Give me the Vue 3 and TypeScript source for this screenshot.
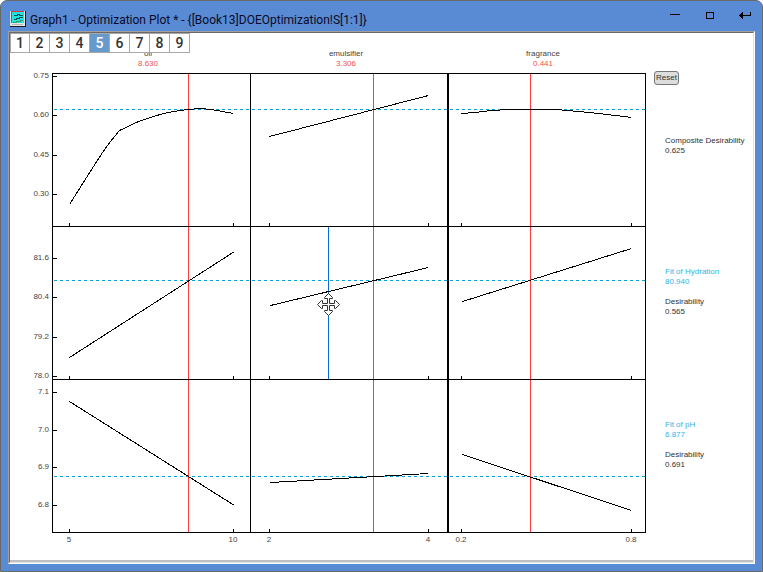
<script setup lang="ts">
import { ref } from 'vue'

interface Tick { label: string; at: number }
interface Factor { name: string; value: string; center: number; current: number; ticks: Tick[] }
interface Response { bottom: number; fit: number; ticks: Tick[] }
interface Readout { fit?: string; fitValue?: string; label: string; value: string }

const title = 'Graph1 - Optimization Plot * - {[Book13]DOEOptimization!S[1:1]}'
const pages = [1, 2, 3, 4, 5, 6, 7, 8, 9]
const activePage = ref(5)

const factors: Factor[] = [
  { name: 'oil', value: '8.630', center: 148, current: 188, ticks: [{ label: '5', at: 69 }, { label: '10', at: 233 }] },
  { name: 'emulsifier', value: '3.306', center: 346, current: 373, ticks: [{ label: '2', at: 269 }, { label: '4', at: 428 }] },
  { name: 'fragrance', value: '0.441', center: 543, current: 530, ticks: [{ label: '0.2', at: 461 }, { label: '0.8', at: 631 }] },
]

const responses: Response[] = [
  { bottom: 226, fit: 109, ticks: [{ label: '0.75', at: 76 }, { label: '0.60', at: 115 }, { label: '0.45', at: 155 }, { label: '0.30', at: 194 }] },
  { bottom: 379, fit: 280, ticks: [{ label: '81.6', at: 258 }, { label: '80.4', at: 297 }, { label: '79.2', at: 337 }, { label: '78.0', at: 376 }] },
  { bottom: 532, fit: 476, ticks: [{ label: '7.1', at: 392 }, { label: '7.0', at: 430 }, { label: '6.9', at: 467 }, { label: '6.8', at: 505 }] },
]

const curves: string[] = [
  '69,204 86,177 102,152 110,141 119,130 138,121 153,116 163,113 173,111 187,109 200,108 210,109 222,111 233,113',
  '269,136 428,95',
  '461,113 475,112 490,110 510,109 556,109 578,111 598,113 615,115 631,117',
  '69,357 234,251',
  '270,305 428,267',
  '462,301 631,248',
  '69,401 234,505',
  '270,482 428,473',
  '462,454 631,510',
]

const readouts: Readout[] = [
  { label: 'Composite Desirability', value: '0.625' },
  { fit: 'Fit of Hydration', fitValue: '80.940', label: 'Desirability', value: '0.565' },
  { fit: 'Fit of pH', fitValue: '6.877', label: 'Desirability', value: '0.691' },
]
</script>

<template>
  <div class="window">
    <header class="titlebar">
      <svg class="app-icon" viewBox="0 0 16 16" width="16" height="16" shape-rendering="crispEdges">
        <rect width="16" height="16" fill="#1c1c1c" />
        <rect width="15" height="15" fill="#e4e4e4" />
        <rect x="2" y="1" width="12" height="11" fill="#1fe3dc" />
        <path d="M1.500 12V0.500H14" fill="none" stroke="#d83a4a" />
        <path d="M4 4.500h3v-1h2v1h4M4 8.500h2v-1h3v-1h4" fill="none" stroke="#0c4a58" />
        <path d="M3 11.500h3v-1h4v-1h3" fill="none" stroke="#2f9e6c" />
        <path d="M2 13.500h11" fill="none" stroke="#b8b8b8" />
      </svg>
      <h1 class="title">{{ title }}</h1>
      <div class="controls">
        <button type="button" class="control" aria-label="Minimize">
          <svg viewBox="0 0 14 10" width="14" height="10" shape-rendering="crispEdges"><path d="M2 3.500h10" /></svg>
        </button>
        <button type="button" class="control" aria-label="Maximize">
          <svg viewBox="0 0 14 10" width="14" height="10" shape-rendering="crispEdges"><path d="M3.500 1v6.500h7V1M3 1.500h8" /></svg>
        </button>
        <button type="button" class="control" aria-label="Restore">
          <svg viewBox="0 0 14 10" width="14" height="10" shape-rendering="crispEdges">
            <path d="M3 4.500h9.500V1" /><path class="solid" d="M1 4.500L5 1v7z" />
          </svg>
        </button>
      </div>
    </header>

    <main class="frame">
      <div class="client">
        <nav class="pages" aria-label="Graph pages">
          <button v-for="p in pages" :key="p" type="button" class="page" :class="{ active: p === activePage }" @click="activePage = p">{{ p }}</button>
        </nav>

        <svg class="plot" viewBox="10 33 643 527" role="img" aria-label="Optimization plot">
          <g v-for="f in factors" :key="f.name" text-anchor="middle">
            <text :x="f.center" y="56" class="label">{{ f.name }}</text>
            <text :x="f.center" y="66" class="label current">{{ f.value }}</text>
            <text v-for="t in f.ticks" :key="t.label" :x="t.at" y="542" class="label">{{ t.label }}</text>
          </g>
          <g v-for="r in responses" :key="r.fit" text-anchor="end">
            <text v-for="t in r.ticks" :key="t.label" x="49" :y="t.at + 2" class="label">{{ t.label }}</text>
          </g>

          <g class="lines" transform="translate(0.5 0.5)">
            <path v-for="r in responses" :key="r.fit" class="fit-line" :d="`M53 ${r.fit}H645`" />
            <path v-for="f in factors" :key="f.name" class="current-line" :d="`M${f.current} 73V532`" />
            <path class="drag-line" d="M328 226V379" />
            <polyline v-for="c in curves" :key="c" :points="c" />
            <path d="M52 73H645V532H52ZM52 226H645M52 379H645M250 73V532" />
            <path class="divider" d="M447.500 73V532" />
            <template v-for="r in responses" :key="r.bottom">
              <path v-for="t in r.ticks" :key="t.label" :d="`M52 ${t.at}h4`" />
              <template v-for="f in factors" :key="f.name">
                <path v-for="t in f.ticks" :key="t.label" :d="`M${t.at} ${r.bottom}v-4`" />
              </template>
            </template>
          </g>

          <g class="move-cursor" transform="translate(328.5 304.5)">
            <path d="M0-11L4-7V-6H1V-1H6V-4H7L11 0L7 4H6V1H1V6H4V7L0 11L-4 7V6H-1V1H-6V4H-7L-11 0L-7-4H-6V-1H-1V-6H-4V-7Z" />
          </g>
        </svg>

        <aside class="side">
          <section v-for="(r, i) in readouts" :key="i" class="readout">
            <button v-if="i === 0" type="button" class="reset">Reset</button>
            <p v-if="r.fit" class="fit">{{ r.fit }}<br />{{ r.fitValue }}</p>
            <p>{{ r.label }}<br />{{ r.value }}</p>
          </section>
        </aside>
      </div>
    </main>
  </div>
</template>

<style>
body { margin: 0; background: #fff; }
</style>

<style scoped>
.window {
  box-sizing: border-box;
  display: flex;
  flex-direction: column;
  min-height: 100vh;
  padding: 0 7px 7px;
  border: 1px solid #696969;
  border-radius: 7px 7px 0 0;
  background: #598bd4;
  font-family: "Liberation Sans", Arial, sans-serif;
}
.titlebar { display: flex; align-items: center; height: 30px; padding: 0 0 0 2px; }
.app-icon { margin-top: 6px; }
.title {
  flex: 1;
  margin: 8px 0 0 4px;
  font: 400 12px/16px Roboto, "Open Sans", sans-serif;
  color: #0a0a28;
  white-space: nowrap;
}
.controls { display: flex; gap: 7px; margin-right: -4px; }
.control { display: flex; width: 28px; justify-content: center; padding: 0; border: 0; background: none; }
.control path { fill: none; stroke: #000; }
.control .solid { fill: #000; stroke: none; }

.frame {
  display: flex;
  flex: 1;
  border: 1px solid;
  border-color: #a0a0a0 #fff #fff #a0a0a0;
}
.client {
  position: relative;
  display: flex;
  flex: 1;
  align-items: flex-start;
  border: 1px solid;
  border-color: #696969 #e3e3e3 #e3e3e3 #696969;
  background: #fff;
  box-shadow: inset 0 -2px #c0c0c0;
}
.pages { position: absolute; top: 0; left: 0; display: flex; background: #fff; }
.page {
  box-sizing: border-box;
  width: 20px;
  height: 20px;
  padding: 0;
  border: 1px solid #a9a9a9;
  border-left: 0;
  background: #fff;
  color: #333;
  font: 500 14px/18px Roboto, sans-serif;
}
.page:first-child { border-left: 1px solid #a9a9a9; }
.page.active { background: #6699cc; color: #fff; }

.plot { flex: 1; min-width: 0; }
.label { font-size: 8px; fill: #444; }
.label.current { fill: #f4524d; }
.lines { fill: none; stroke: #000; stroke-width: 1px; shape-rendering: crispEdges; }
.fit-line { stroke: #00a2d9; stroke-dasharray: 3 3; }
.current-line { stroke: #ff3b3b; }
.drag-line { stroke: #0a6ad8; }
.divider { stroke-width: 2px; }
.move-cursor { fill: #fff; stroke: #333; stroke-width: 1px; }

.side {
  display: grid;
  align-self: stretch;
  grid-template-rows: 155fr 153fr 153fr;
  width: 100px;
  padding: 38px 0 28px;
  box-sizing: border-box;
}
.readout { display: flex; flex-direction: column; gap: 10px; padding: 40px 0 0 12px; font-size: 8px; line-height: 10px; color: #333; }
.readout:first-child { padding-top: 0; gap: 51px; }
.readout p { margin: 0; white-space: nowrap; }
.readout .fit { color: #2fb4e6; }
.reset {
  box-sizing: border-box;
  width: 25px;
  height: 14px;
  margin-left: -11px;
  padding: 0;
  border: 1px solid #777;
  border-radius: 3px;
  background: #ddd;
  color: #333;
  font: 8px/12px "Liberation Sans", Arial, sans-serif;
}
</style>
